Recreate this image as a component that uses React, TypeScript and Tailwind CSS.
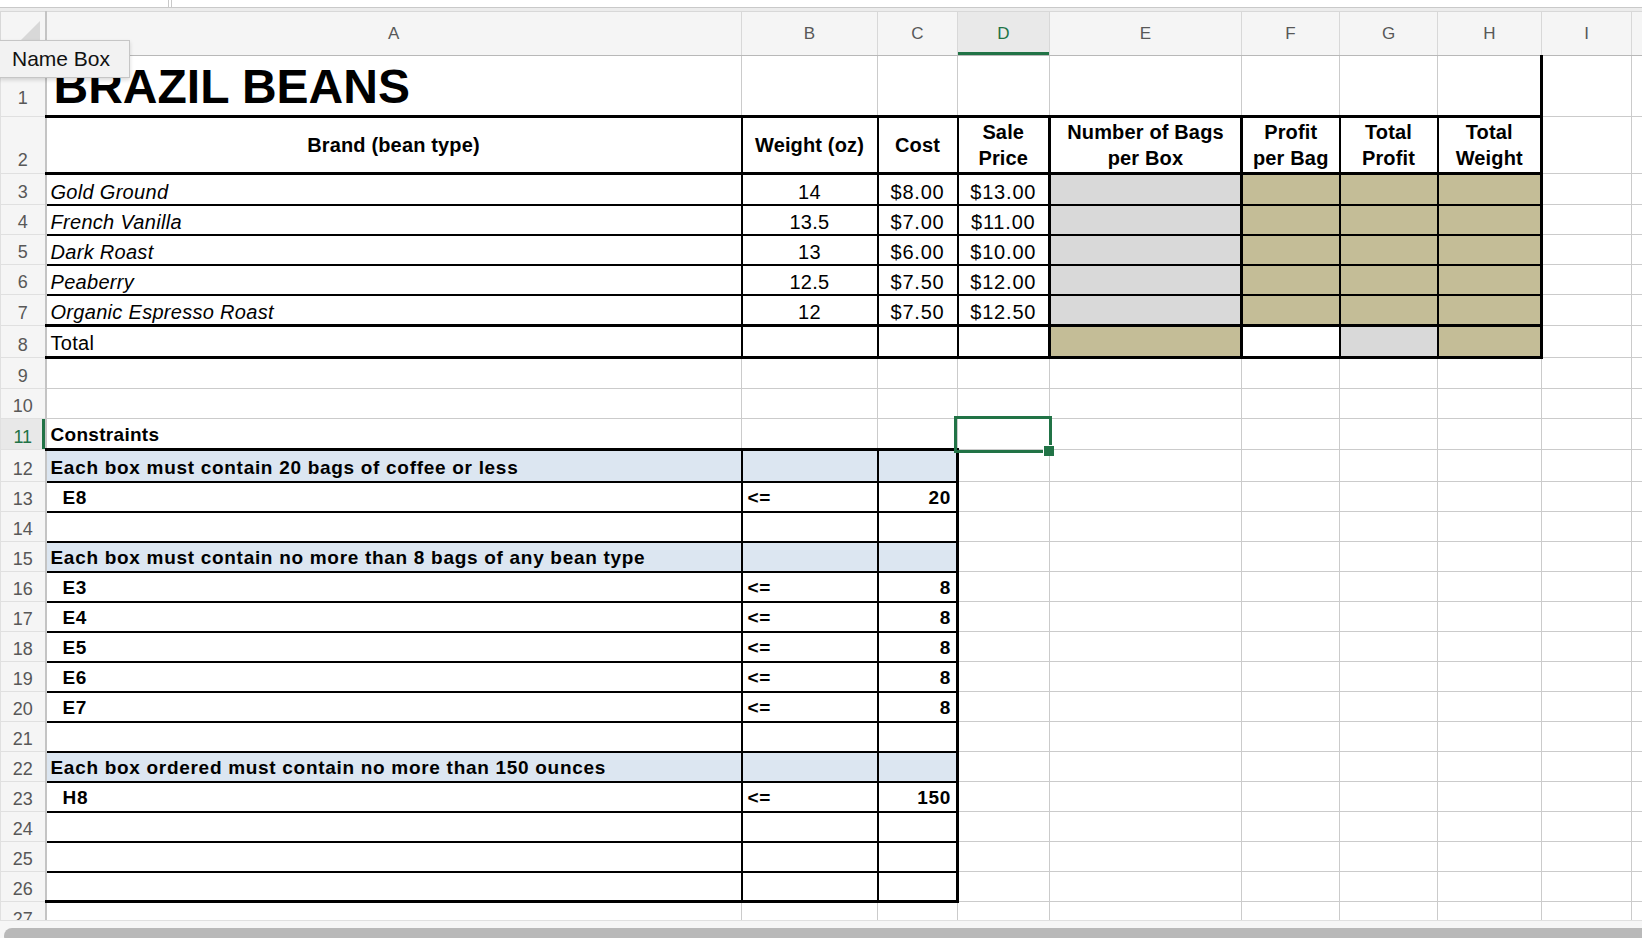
import React from "react";

const G = "border border-[#cbcbcb] p-0 overflow-hidden whitespace-nowrap";
const B2 = "border-b-2 border-b-black";
const B3 = "border-b-[3px] border-b-black";
const R2 = "border-r-2 border-r-black";
const R3 = "border-r-[3px] border-r-black";
const TXT = "text-[20px] leading-[22px] align-bottom pb-[1px] tracking-[0.3px]";
const HDR = "text-[20px] font-bold leading-[26px] text-center align-middle tracking-[0.15px]";
const CB = "text-[19px] font-bold leading-[22px] align-bottom pb-[2px] tracking-[0.7px]";
const BLUE = "bg-[#dce6f1]";
const GRAY = "bg-[#d9d9d9]";
const TAN = "bg-[#c4bd97]";
const RH =
  "border border-[#e0e0e0] border-r-2 border-r-[#c4c4c4] p-0 text-[18px] leading-[20px] text-center align-bottom bg-[#f5f5f5] text-[#585858]";
const CH =
  "border border-[#d8d8d8] border-b-[#b8b8b8] bg-[#f5f5f5] text-[#585858] text-[17px] font-normal text-center align-middle p-0";

type C = { t?: React.ReactNode; c: string };

const empty = (n: number): C[] => Array.from({ length: n }, () => ({ c: G }));

function Row({
  n,
  h,
  cells,
  rh,
}: {
  n: React.ReactNode;
  h: string;
  cells: C[];
  rh?: string;
}) {
  return (
    <tr className={h}>
      <td className={rh ?? `${RH} pb-[2px]`}>{n}</td>
      {cells.map((x, i) => (
        <td key={i} className={x.c}>
          {x.t}
        </td>
      ))}
    </tr>
  );
}

const beans: [string, string, string, string][] = [
  ["Gold Ground", "14", "$8.00", "$13.00"],
  ["French Vanilla", "13.5", "$7.00", "$11.00"],
  ["Dark Roast", "13", "$6.00", "$10.00"],
  ["Peaberry", "12.5", "$7.50", "$12.00"],
  ["Organic Espresso Roast", "12", "$7.50", "$12.50"],
];

function dataCells(b: [string, string, string, string], last: boolean): C[] {
  const bot = last ? B3 : B2;
  return [
    { t: b[0], c: `${G} ${bot} ${R2} ${TXT} italic pl-[4px]` },
    { t: b[1], c: `${G} ${bot} ${R2} ${TXT} text-center` },
    { t: b[2], c: `${G} ${bot} ${R2} ${TXT} text-center tracking-[0.8px]` },
    { t: b[3], c: `${G} ${bot} ${R3} ${TXT} text-center tracking-[0.8px]` },
    { c: `${G} ${bot} ${R3} ${GRAY}` },
    { c: `${G} ${bot} ${R2} ${TAN}` },
    { c: `${G} ${bot} ${R2} ${TAN}` },
    { c: `${G} ${bot} ${R3} ${TAN}` },
    { c: G },
    { c: G },
  ];
}

function headCells(text: string): C[] {
  return [
    { t: text, c: `${G} ${B2} ${R2} ${BLUE} ${CB} pl-[4px]` },
    { c: `${G} ${B2} ${R2} ${BLUE}` },
    { c: `${G} ${B2} ${R3} ${BLUE}` },
    ...empty(7),
  ];
}

function consCells(ref: string, val: string): C[] {
  return [
    { t: ref, c: `${G} ${B2} ${R2} ${CB} pl-[16px]` },
    { t: "<=", c: `${G} ${B2} ${R2} ${CB} pl-[5px]` },
    { t: val, c: `${G} ${B2} ${R3} ${CB} text-right pr-[5px]` },
    ...empty(7),
  ];
}

function blankCons(last: boolean): C[] {
  if (last)
    return [
      { c: `${G} ${B3} ${R2}` },
      { c: `${G} ${B3} ${R2}` },
      { c: `${G} ${B3} ${R3}` },
      ...empty(7),
    ];
  return [
    { c: `${G} ${B2} ${R2}` },
    { c: `${G} ${B2} ${R2}` },
    { c: `${G} ${B2} ${R3}` },
    ...empty(7),
  ];
}

export default function App() {
  const letters = ["A", "B", "C", "D", "E", "F", "G", "H", "I", ""];
  return (
    <div className="relative w-[1642px] h-[938px] overflow-hidden bg-white text-black font-['Liberation_Sans',Arial,sans-serif]">
      {/* top strip (formula bar remnant) */}
      <div className="flex h-[8px]">
        <div className="w-[169px] border-r border-b border-[#c9c9c9] bg-white" />
        <div className="w-[2px] border-b border-[#c9c9c9] bg-white" />
        <div className="flex-1 border-l border-b border-[#c9c9c9] bg-white" />
      </div>
      <div className="h-[3px] bg-[#ececec]" />

      {/* sheet */}
      <div className="h-[909px] overflow-hidden">
        <table className="table-fixed border-collapse w-[1691px]">
          <colgroup>
            <col className="w-[45px]" />
            <col className="w-[696px]" />
            <col className="w-[136px]" />
            <col className="w-[80px]" />
            <col className="w-[92px]" />
            <col className="w-[192px]" />
            <col className="w-[98px]" />
            <col className="w-[98px]" />
            <col className="w-[104px]" />
            <col className="w-[90px]" />
            <col className="w-[60px]" />
          </colgroup>
          <tbody>
            <tr className="h-[44px]">
              <th className="border border-[#d8d8d8] border-b-[#b8b8b8] border-r-2 border-r-[#c4c4c4] bg-[#f5f5f5] p-0">
                <svg width="44" height="43" className="block">
                  <polygon points="39,9 39,40 8,40" fill="#d8d8d8" />
                </svg>
              </th>
              {letters.map((l, i) =>
                l === "D" ? (
                  <th
                    key={i}
                    className="border border-[#d8d8d8] border-b-[#b8b8b8] bg-[#e9e9e9] text-[#217346] text-[17px] font-normal text-center align-middle p-0 shadow-[inset_0_-3px_0_#217346]"
                  >
                    {l}
                  </th>
                ) : (
                  <th key={i} className={CH}>
                    {l}
                  </th>
                )
              )}
            </tr>

            <Row
              n="1"
              h="h-[61px]"
              rh={`${RH} pb-[8px]`}
              cells={[
                {
                  t: "BRAZIL BEANS",
                  c: `${G} ${B3} text-[48px] font-bold leading-[48px] align-bottom pl-[7px] pb-[4px]`,
                },
                { c: `${G} ${B3}` },
                { c: `${G} ${B3}` },
                { c: `${G} ${B3}` },
                { c: `${G} ${B3}` },
                { c: `${G} ${B3}` },
                { c: `${G} ${B3}` },
                { c: `${G} ${B3} ${R3}` },
                { c: G },
                { c: G },
              ]}
            />

            <Row
              n="2"
              h="h-[57px]"
              rh={`${RH} pb-[3px]`}
              cells={[
                { t: "Brand (bean type)", c: `${G} ${B3} ${R2} ${HDR}` },
                { t: "Weight (oz)", c: `${G} ${B3} ${R2} ${HDR}` },
                { t: "Cost", c: `${G} ${B3} ${R2} ${HDR}` },
                {
                  t: (
                    <>
                      Sale
                      <br />
                      Price
                    </>
                  ),
                  c: `${G} ${B3} ${R3} ${HDR}`,
                },
                {
                  t: (
                    <>
                      Number of Bags
                      <br />
                      per Box
                    </>
                  ),
                  c: `${G} ${B3} ${R3} ${HDR}`,
                },
                {
                  t: (
                    <>
                      Profit
                      <br />
                      per Bag
                    </>
                  ),
                  c: `${G} ${B3} ${R2} ${HDR}`,
                },
                {
                  t: (
                    <>
                      Total
                      <br />
                      Profit
                    </>
                  ),
                  c: `${G} ${B3} ${R2} ${HDR}`,
                },
                {
                  t: (
                    <>
                      Total
                      <br />
                      Weight
                    </>
                  ),
                  c: `${G} ${B3} ${R3} ${HDR}`,
                },
                { c: G },
                { c: G },
              ]}
            />

            {beans.map((b, i) => (
              <Row
                key={i}
                n={String(i + 3)}
                h={i === 0 || i === 4 ? "h-[31px]" : "h-[30px]"}
                cells={dataCells(b, i === 4)}
              />
            ))}

            <Row
              n="8"
              h="h-[32px]"
              cells={[
                { t: "Total", c: `${G} ${B3} ${R2} ${TXT} pl-[4px] pb-[2px]` },
                { c: `${G} ${B3} ${R2}` },
                { c: `${G} ${B3} ${R2}` },
                { c: `${G} ${B3} ${R3}` },
                { c: `${G} ${B3} ${R3} ${TAN}` },
                { c: `${G} ${B3} ${R2}` },
                { c: `${G} ${B3} ${R2} ${GRAY}` },
                { c: `${G} ${B3} ${R3} ${TAN}` },
                { c: G },
                { c: G },
              ]}
            />

            <Row n="9" h="h-[31px]" cells={empty(10)} />
            <Row n="10" h="h-[30px]" cells={empty(10)} />

            <Row
              n="11"
              h="h-[31px]"
              rh="border border-[#e0e0e0] border-r-2 border-r-[#c4c4c4] p-0 pb-[2px] text-[18px] leading-[20px] text-center align-bottom bg-[#e8e8e8] text-[#217346] shadow-[inset_-3px_0_0_#217346]"
              cells={[
                {
                  t: "Constraints",
                  c: `${G} ${B3} text-[19px] font-bold leading-[22px] align-bottom pb-[2px] tracking-[0.3px] pl-[4px]`,
                },
                { c: `${G} ${B3}` },
                { c: `${G} ${B3}` },
                ...empty(7),
              ]}
            />

            <Row n="12" h="h-[32px]" cells={headCells("Each box must contain 20 bags of coffee or less")} />
            <Row n="13" h="h-[30px]" cells={consCells("E8", "20")} />
            <Row n="14" h="h-[30px]" cells={blankCons(false)} />
            <Row
              n="15"
              h="h-[30px]"
              cells={headCells("Each box must contain no more than 8 bags of any bean type")}
            />
            <Row n="16" h="h-[30px]" cells={consCells("E3", "8")} />
            <Row n="17" h="h-[30px]" cells={consCells("E4", "8")} />
            <Row n="18" h="h-[30px]" cells={consCells("E5", "8")} />
            <Row n="19" h="h-[30px]" cells={consCells("E6", "8")} />
            <Row n="20" h="h-[30px]" cells={consCells("E7", "8")} />
            <Row n="21" h="h-[30px]" cells={blankCons(false)} />
            <Row
              n="22"
              h="h-[30px]"
              cells={headCells("Each box ordered must contain no more than 150 ounces")}
            />
            <Row n="23" h="h-[30px]" cells={consCells("H8", "150")} />
            <Row n="24" h="h-[30px]" cells={blankCons(false)} />
            <Row n="25" h="h-[30px]" cells={blankCons(false)} />
            <Row n="26" h="h-[30px]" cells={blankCons(true)} />
            <Row n="27" h="h-[30px]" cells={empty(10)} />
          </tbody>
        </table>
      </div>

      {/* bottom scrollbar */}
      <div className="h-[18px] border-t border-[#e0e0e0] bg-[#f6f6f6] overflow-hidden">
        <div className="mt-[7px] ml-[4px] h-[16px] rounded-l-[8px] bg-[#b9b9b9]" />
      </div>

      {/* selection on D11 */}
      <div className="absolute left-[954px] top-[416px] w-[98px] h-[37px] border-[3px] border-[#217346]" />
      <div className="absolute left-[1043px] top-[445px] w-[11px] h-[11px] bg-[#217346] border-l border-t border-white" />

      {/* Name Box tooltip */}
      <div className="absolute left-[-1px] top-[40px] w-[131px] h-[38px] bg-[#f2f2f2] border border-[#c6c6c6] shadow-[0_2px_4px_rgba(0,0,0,0.15)] pl-[12px] text-[21px] leading-[36px] text-[#111]">
        Name Box
      </div>
    </div>
  );
}
